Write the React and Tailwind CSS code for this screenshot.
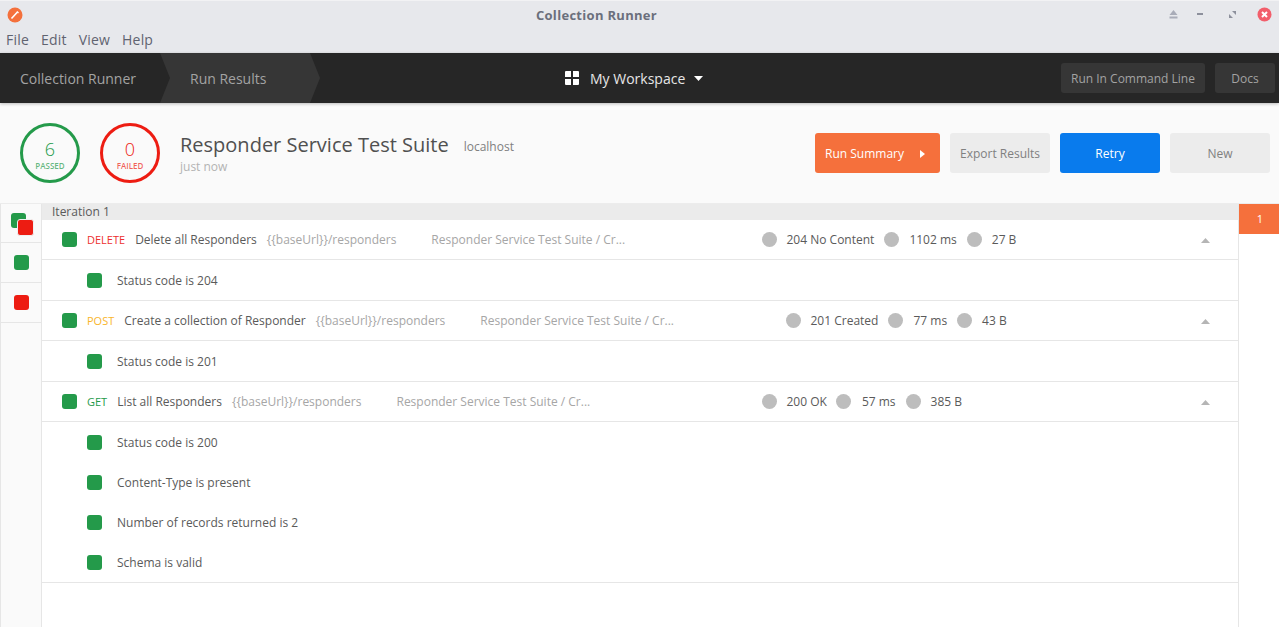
import React from "react";

const Square = ({ color = "bg-[#249a4a]" }) => <span className={`block w-[15px] h-[15px] rounded-[3px] shrink-0 ${color}`}></span>;

const Dot = () => <span className="block w-[15px] h-[15px] rounded-full bg-[#bdbdbd] shrink-0"></span>;

const Caret = () => (
  <svg width="9" height="5" viewBox="0 0 9 5" className="shrink-0">
    <path d="M4.5 0L9 5H0z" fill="#b5b5b5" />
  </svg>
);

const requests = [
  {
    method: "DELETE",
    methodColor: "text-[#ed2f2f]",
    name: "Delete all Responders",
    status: "204 No Content",
    time: "1102 ms",
    size: "27 B",
    statsLeft: "left-[720px]",
    tests: ["Status code is 204"],
  },
  {
    method: "POST",
    methodColor: "text-[#f9b52c]",
    name: "Create a collection of Responder",
    status: "201 Created",
    time: "77 ms",
    size: "43 B",
    statsLeft: "left-[744px]",
    tests: ["Status code is 201"],
  },
  {
    method: "GET",
    methodColor: "text-[#249a4a]",
    name: "List all Responders",
    status: "200 OK",
    time: "57 ms",
    size: "385 B",
    statsLeft: "left-[720px]",
    tests: ["Status code is 200", "Content-Type is present", "Number of records returned is 2", "Schema is valid"],
  },
];

function RequestBlock({ req }) {
  return (
    <div className="border-b border-[#e6e6e6]">
      <div className="relative h-[40px] flex items-center pl-[20px] border-b border-[#e6e6e6]">
        <Square />
        <span className={`ml-[10px] mt-[1px] text-[11px] ${req.methodColor}`}>{req.method}</span>
        <span className="ml-[10px] text-[#5a5a5a]">{req.name}</span>
        <span className="ml-[10px] text-[#a6a6a6]">{"{{baseUrl}}/responders"}</span>
        <span className="ml-[35px] text-[#a6a6a6]">Responder Service Test Suite / Cr...</span>
        <div className={`absolute top-[12px] h-[15px] flex items-center text-[#5a5a5a] ${req.statsLeft}`}>
          <Dot />
          <span className="ml-[9.5px]">{req.status}</span>
          <span className="ml-[9.5px]"><Dot /></span>
          <span className="ml-[10.5px]">{req.time}</span>
          <span className="ml-[10px]"><Dot /></span>
          <span className="ml-[10px]">{req.size}</span>
        </div>
        <div className="absolute right-[28px] top-[18px] flex"><Caret /></div>
      </div>
      {req.tests.map((t) => (
        <div key={t} className="h-[40px] flex items-center pl-[45px] text-[#5a5a5a]">
          <Square />
          <span className="ml-[15px] mt-[2px]">{t}</span>
        </div>
      ))}
    </div>
  );
}

export default function App() {
  return (
    <div className="w-[1279px] h-[627px] overflow-hidden flex flex-col bg-white text-[12px] font-['Open_Sans',sans-serif]">
      {/* window chrome */}
      <div className="h-[53px] shrink-0 bg-[#e7e8ec] border-t border-[#f2f2f4] relative">
        <div className="h-[29px] pr-[86px] flex items-center justify-center font-bold text-[13px] text-[#6b6f7c] tracking-[0.3px]">Collection Runner</div>
        <svg width="16" height="16" viewBox="0 0 16 16" className="absolute left-[7px] top-[6px]">
          <circle cx="8" cy="8" r="7.5" fill="#f4703c" />
          <path d="M4.5 11.5L10.5 5" stroke="#fff" strokeWidth="1.6" />
          <path d="M10 4.5l1.5 1.5" stroke="#fff" strokeWidth="1.2" />
        </svg>
        <div className="flex gap-[12px] pl-[6px] text-[14px] tracking-[0.2px] text-[#5f6370] leading-[18px] mt-[1px]">
          <span>File</span>
          <span>Edit</span>
          <span>View</span>
          <span>Help</span>
        </div>
        <svg width="9" height="9" viewBox="0 0 9 9" className="absolute left-[1169px] top-[9px]">
          <path d="M4.5 0L8.500 5H.5z M.5 6.5h8V8.500h-8z" fill="#a9acb8" />
        </svg>
        <span className="absolute left-[1197px] top-[12px] w-[6px] h-[2px] bg-[#8d909c]"></span>
        <svg width="7" height="7" viewBox="0 0 7 7" className="absolute left-[1229px] top-[10px]">
          <path d="M3 0h4v4z" fill="#8d909c" />
          <path d="M0 3l4 4H0z" fill="#8d909c" />
        </svg>
        <svg width="15" height="15" viewBox="0 0 15 15" className="absolute left-[1257px] top-[6px]">
          <circle cx="7.500" cy="7.500" r="7" fill="#f25e6b" />
          <path d="M5 5l5 5M10 5l-5 5" stroke="#fff" strokeWidth="2" />
        </svg>
      </div>

      {/* top nav */}
      <div className="h-[50px] shrink-0 bg-[#262626] relative flex items-center text-[14px] text-[#a3a3a3] shadow-[0_1px_3px_rgba(0,0,0,0.25)] z-10">
        <span className="pl-[20px] w-[160px]">Collection Runner</span>
        <div className="relative h-full w-[160px] bg-[#363636] flex items-center pl-[30px] [clip-path:polygon(0_0,150px_0,160px_50%,150px_100%,0_100%,10px_50%)]">
          Run Results
        </div>
        <div className="absolute left-[565px] top-0 h-full flex items-center text-[#e6e6e6]">
          <svg width="14" height="14" viewBox="0 0 14 14">
            <path d="M0 1a1 1 0 011-1h5v6H0zM8 0h5a1 1 0 011 1v5H8zM0 8h6v6H1a1 1 0 01-1-1zM8 8h6v5a1 1 0 01-1 1H8z" fill="#fff" />
          </svg>
          <span className="ml-[11px]">My Workspace</span>
          <svg width="9" height="5" viewBox="0 0 9 5" className="ml-[9px]">
            <path d="M0 0h9L4.500 5z" fill="#fff" />
          </svg>
        </div>
        <div className="ml-auto mr-[4px] flex gap-[10px] text-[12px]">
          <div className="h-[30px] w-[144px] pt-[2px] rounded-[3px] bg-[#363636] flex items-center justify-center">Run In Command Line</div>
          <div className="h-[30px] w-[60px] pt-[2px] rounded-[3px] bg-[#363636] flex items-center justify-center">Docs</div>
        </div>
      </div>

      {/* run summary */}
      <div className="h-[100px] shrink-0 bg-[#fafafa] flex items-center pl-[20px] pr-[9px]">
        <div className="w-[60px] h-[60px] rounded-full border-[3px] border-[#249a4a] flex flex-col items-center justify-center pt-[2px]">
          <span className="text-[18px] font-light leading-[22px] text-[#249a4a]">6</span>
          <span className="text-[8px] font-semibold leading-[10px] mt-[1px] text-[#249a4a]/70">PASSED</span>
        </div>
        <div className="ml-[20px] w-[60px] h-[60px] rounded-full border-[3px] border-[#ed1c12] flex flex-col items-center justify-center pt-[2px]">
          <span className="text-[18px] font-light leading-[22px] text-[#ed1c12]">0</span>
          <span className="text-[8px] font-semibold leading-[10px] mt-[1px] text-[#ed1c12]/70">FAILED</span>
        </div>
        <div className="ml-[20px]">
          <div className="flex items-baseline">
            <span className="text-[20px] leading-[27px] text-[#505050]">Responder Service Test Suite</span>
            <span className="ml-[15px] -translate-y-px text-[#808080]">localhost</span>
          </div>
          <div className="text-[#b3b3b3] leading-[16px] mt-[1px]">just now</div>
        </div>
        <div className="ml-auto flex gap-[10px]">
          <div className="h-[40px] w-[125px] pt-[2px] rounded-[3px] bg-[#f5703c] text-white flex items-center pl-[10px]">
            Run Summary
            <svg width="5" height="8" viewBox="0 0 5 8" className="ml-[16px]">
              <path d="M0 0l5 4-5 4z" fill="#fff" />
            </svg>
          </div>
          <div className="h-[40px] w-[100px] pt-[2px] rounded-[3px] bg-[#ececec] text-[#808080] flex items-center justify-center">Export Results</div>
          <div className="h-[40px] w-[100px] pt-[2px] rounded-[3px] bg-[#097bed] text-white flex items-center justify-center">Retry</div>
          <div className="h-[40px] w-[100px] pt-[2px] rounded-[3px] bg-[#ececec] text-[#808080] flex items-center justify-center">New</div>
        </div>
      </div>

      {/* results */}
      <div className="flex-1 flex min-h-0 border-t border-[#ececec]">
        <div className="w-[42px] shrink-0 bg-[#fafafa] border-x border-[#e6e6e6]">
          <div className="h-[39px] border-b border-[#e6e6e6] relative">
            <span className="absolute left-[10px] top-[9px] w-[15px] h-[15px] rounded-[3px] bg-[#249a4a]"></span>
            <span className="absolute left-[16px] top-[15px] w-[17px] h-[17px] rounded-[3px] bg-[#ed1c12] border border-[#f0f0f0]"></span>
          </div>
          <div className="h-[40px] border-b border-[#e6e6e6] flex items-center justify-center"><Square /></div>
          <div className="h-[40px] border-b border-[#e6e6e6] flex items-center justify-center"><Square color="bg-[#ed1c12]" /></div>
        </div>
        <div className="flex-1 min-w-0 relative">
          <div className="h-[16px] bg-[#ebebeb] pl-[10px] leading-[16px] text-[#5a5a5a]">Iteration 1</div>
          {requests.map((r) => (
            <RequestBlock key={r.method} req={r} />
          ))}
        </div>
        <div className="w-[41px] shrink-0 border-l border-[#e6e6e6] bg-white">
          <div className="h-[30px] pl-[2px] bg-[#f5703c] text-white text-[11px] flex items-center justify-center">1</div>
        </div>
      </div>
    </div>
  );
}
